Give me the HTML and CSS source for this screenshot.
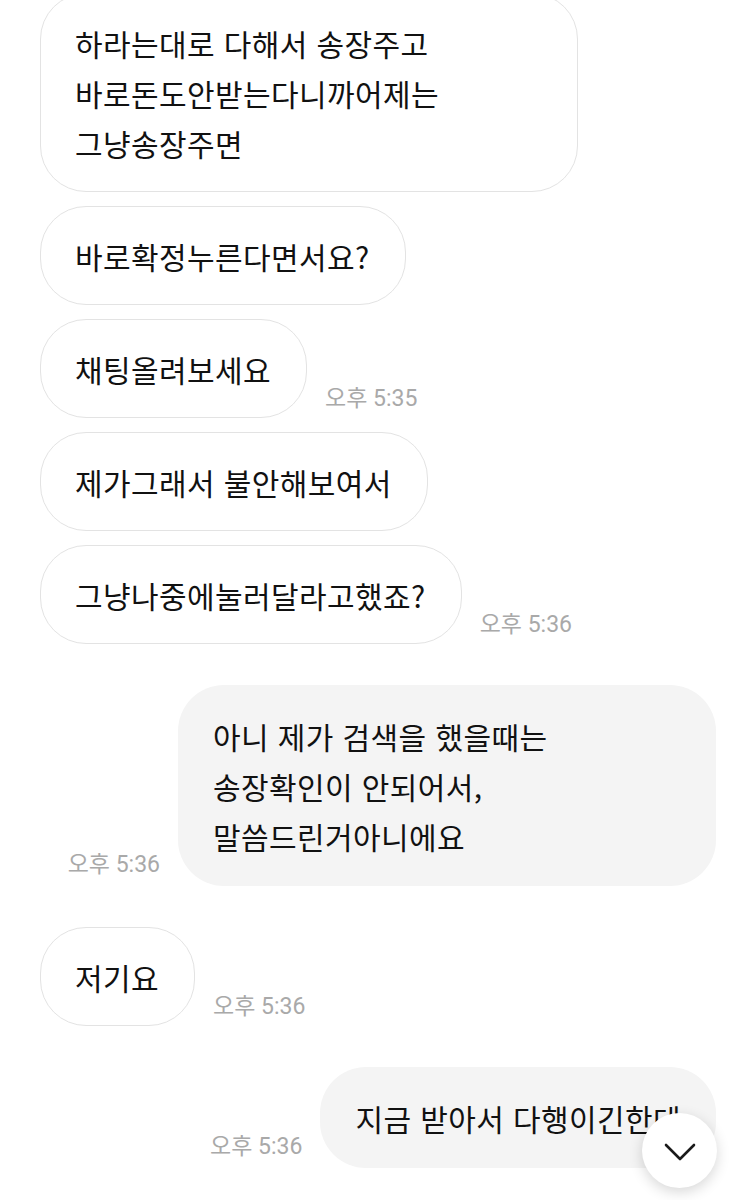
FILE: index.html
```html
<!DOCTYPE html>
<html lang="ko">
<head>
<meta charset="utf-8">
<link rel="stylesheet" href="styles.css">
</head>
<body>
<div class="chat">
  <div class="row left">
    <div class="bubble wide">하라는대로 다해서 송장주고<br>바로돈도안받는다니까어제는<br>그냥송장주면</div>
  </div>
  <div class="row left">
    <div class="bubble">바로확정누른다면서요?</div>
  </div>
  <div class="row left">
    <div class="bubble">채팅올려보세요</div>
    <span class="time">오후 5:35</span>
  </div>
  <div class="row left">
    <div class="bubble">제가그래서 불안해보여서</div>
  </div>
  <div class="row left">
    <div class="bubble">그냥나중에눌러달라고했죠?</div>
    <span class="time">오후 5:36</span>
  </div>
  <div class="row right group">
    <span class="time">오후 5:36</span>
    <div class="bubble wide">아니 제가 검색을 했을때는<br>송장확인이 안되어서,<br>말씀드린거아니에요</div>
  </div>
  <div class="row left group">
    <div class="bubble">저기요</div>
    <span class="time">오후 5:36</span>
  </div>
  <div class="row right group">
    <span class="time">오후 5:36</span>
    <div class="bubble">지금 받아서 다행이긴한데</div>
  </div>
</div>
<button class="scroll-down" aria-label="아래로">
  <svg width="32" height="18" viewBox="0 0 32 18"><path d="M2 2 L16 16 L30 2" fill="none" stroke="#1a1a1a" stroke-width="2.6" stroke-linecap="round" stroke-linejoin="round"/></svg>
</button>
</body>
</html>
```

FILE: styles.css
```css
html, body {
  margin: 0;
  padding: 0;
  background: #ffffff;
  overflow: hidden;
}
body {
  width: 755px;
  height: 1200px;
  position: relative;
  font-family: "Noto Sans CJK KR", "Noto Sans", sans-serif;
  color: #111111;
}
.chat {
  display: flex;
  flex-direction: column;
  gap: 14px;
  padding: 0 39px 0 40px;
  margin-top: -7px;
}
.row {
  display: flex;
  align-items: flex-end;
  gap: 18px;
}
.row.right {
  justify-content: flex-end;
}
.row.group {
  margin-top: 27px;
}
.bubble {
  max-width: 538px;
  box-sizing: border-box;
  font-size: 30px;
  letter-spacing: 0.4px;
  line-height: 50px;
  white-space: nowrap;
  border-radius: 46px;
}
.bubble.wide {
  width: 538px;
}
.left .bubble {
  background: #ffffff;
  border: 1px solid #e3e3e3;
  padding: 23.5px 35px 23.5px 34px;
}
.right .bubble {
  background: #f4f4f4;
  padding: 25.5px 35px;
}
.time {
  font-family: Roboto, "Noto Sans CJK KR", sans-serif;
  font-size: 23px;
  line-height: 26px;
  color: #a9a9a9;
  white-space: nowrap;
  margin-bottom: 6px;
}
.right .time {
  margin-bottom: 8px;
}
.scroll-down {
  position: absolute;
  left: 642px;
  top: 1113px;
  width: 75px;
  height: 75px;
  border-radius: 50%;
  border: none;
  background: #ffffff;
  box-shadow: 0 4px 14px rgba(0, 0, 0, 0.16);
  display: flex;
  align-items: center;
  justify-content: center;
  padding: 0;
}
.scroll-down svg {
  display: block;
  margin-top: 2px;
}
```
